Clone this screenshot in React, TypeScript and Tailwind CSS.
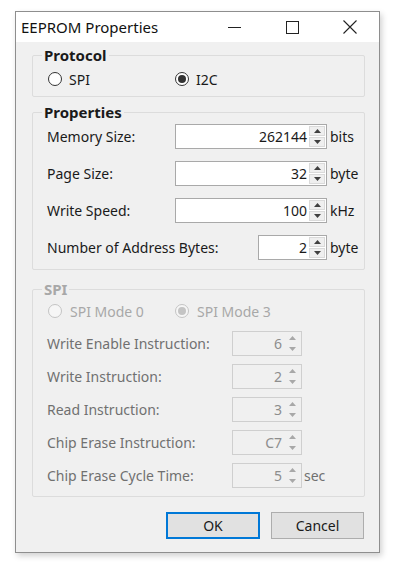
import React from "react";

const FONT = "font-['Noto_Sans',sans-serif]";

function Arrow({ up, disabled }: { up: boolean; disabled?: boolean }) {
  return (
    <svg width="7" height="4" viewBox="0 0 7 4">
      <path
        d={up ? "M0 4 L3.5 0 L7 4 Z" : "M0 0 L3.5 4 L7 0 Z"}
        fill={disabled ? "#a8a8a8" : "#404040"}
      />
    </svg>
  );
}

function Spin({ value, w, disabled }: { value: string; w: string; disabled?: boolean }) {
  return (
    <div
      className={`flex h-[25px] ${w} border ${
        disabled ? "border-[#cfcfcf] bg-[#f0f0f0]" : "border-[#a9a9a9] bg-white"
      }`}
    >
      <div
        className={`flex-1 text-right pr-[2px] leading-[23px] ${
          disabled ? "text-[#8d8d8d]" : "text-[#1a1a1a]"
        }`}
      >
        {value}
      </div>
      <div className="w-[17px] flex flex-col py-[1px] pr-[1px] gap-[1px]">
        <div
          className={`flex-1 flex items-center justify-center ${
            disabled ? "bg-[#f0f0f0]" : "bg-[#efefef] border border-[#dadada]"
          }`}
        >
          <Arrow up disabled={disabled} />
        </div>
        <div
          className={`flex-1 flex items-center justify-center ${
            disabled ? "bg-[#f0f0f0]" : "bg-[#efefef] border border-[#dadada]"
          }`}
        >
          <Arrow up={false} disabled={disabled} />
        </div>
      </div>
    </div>
  );
}

function Radio({ checked, disabled }: { checked?: boolean; disabled?: boolean }) {
  return (
    <div
      className={`w-[14px] h-[14px] rounded-full border flex items-center justify-center ${
        disabled ? "border-[#c4c4c4] bg-[#f6f6f6]" : "border-[#333333] bg-white"
      }`}
    >
      {checked && (
        <div
          className={`w-[8px] h-[8px] rounded-full ${
            disabled ? "bg-[#c4c4c4]" : "bg-[#333333]"
          }`}
        />
      )}
    </div>
  );
}

function Legend({ text, disabled }: { text: string; disabled?: boolean }) {
  return (
    <legend
      className={`-ml-[5px] px-[2px] font-bold leading-[16px] text-[15px] ${
        disabled ? "text-[#a8a8a8]" : "text-[#1a1a1a]"
      }`}
    >
      {text}
    </legend>
  );
}

function PropRow({ label, value, unit, w }: { label: string; value: string; unit: string; w: string }) {
  return (
    <div className="flex items-center h-[25px]">
      <div className="flex-1 text-[#1a1a1a]">{label}</div>
      <Spin value={value} w={w} />
      <div className="w-[37px] pl-[3px] text-[#1a1a1a]">{unit}</div>
    </div>
  );
}

function SpiRow({ label, value, unit }: { label: string; value: string; unit?: string }) {
  return (
    <div className="flex items-center h-[25px]">
      <div className="flex-1 text-[#707070]">{label}</div>
      <Spin value={value} w="w-[70px]" disabled />
      <div className="w-[62px] pl-[2px] text-[#707070]">{unit ?? ""}</div>
    </div>
  );
}

export default function App() {
  return (
    <div className={`w-[399px] h-[567px] bg-white pt-[11px] pl-[15px] ${FONT} text-[14px]`}>
      <div className="w-[365px] h-[542px] border border-[#8e8e8e] bg-[#f0f0f0] flex flex-col shadow-[2px_3px_6px_rgba(0,0,0,0.18)]">
        {/* title bar */}
        <div className="h-[30px] bg-white flex items-center">
          <div className="flex-1 pl-[5px] text-[15px] text-[#111] leading-[30px]">EEPROM Properties</div>
          <div className="w-[58px] h-full flex items-center justify-center">
            <svg width="13" height="13" viewBox="0 0 13 13">
              <path d="M0 6.5 H13" stroke="#222" strokeWidth="1" />
            </svg>
          </div>
          <div className="w-[58px] h-full flex items-center justify-center">
            <svg width="13" height="13" viewBox="0 0 13 13">
              <rect x="0.5" y="0.5" width="12" height="12" fill="none" stroke="#222" strokeWidth="1" />
            </svg>
          </div>
          <div className="w-[58px] h-full flex items-center justify-center">
            <svg width="14" height="14" viewBox="0 0 14 14">
              <path d="M0.5 0.5 L13.5 13.5 M13.5 0.5 L0.5 13.5" stroke="#222" strokeWidth="1.1" />
            </svg>
          </div>
        </div>

        {/* body */}
        <div className="flex-1 flex flex-col pt-[5px] pl-[16px] pr-[14px]">
          {/* Protocol */}
          <fieldset className="border border-[#dcdcdc] rounded-[2px] pl-[14px] pt-[6px] pb-[7px]">
            <Legend text="Protocol" />
            <div className="flex items-center h-[20px] pl-[1px]">
              <div className="w-[127px] flex items-center gap-[7px]">
                <Radio />
                <span className="text-[#1a1a1a]">SPI</span>
              </div>
              <div className="flex items-center gap-[7px]">
                <Radio checked />
                <span className="text-[#1a1a1a]">I2C</span>
              </div>
            </div>
          </fieldset>

          {/* Properties */}
          <fieldset className="mt-[7px] border border-[#dcdcdc] rounded-[2px] pl-[14px] pt-[4px] pb-[9px] flex flex-col gap-[12px]">
            <Legend text="Properties" />
            <PropRow label="Memory Size:" value="262144" unit="bits" w="w-[152px]" />
            <PropRow label="Page Size:" value="32" unit="byte" w="w-[152px]" />
            <PropRow label="Write Speed:" value="100" unit="kHz" w="w-[152px]" />
            <PropRow label="Number of Address Bytes:" value="2" unit="byte" w="w-[69px]" />
          </fieldset>

          {/* SPI */}
          <fieldset className="mt-[11px] border border-[#dcdcdc] rounded-[2px] pl-[14px] pt-[4px] pb-[8px] flex flex-col gap-[8px]">
            <Legend text="SPI" disabled />
            <div className="flex items-center h-[20px] mb-[2px] pl-[1px]">
              <div className="w-[127px] flex items-center gap-[8px]">
                <Radio disabled />
                <span className="text-[#a8a8a8]">SPI Mode 0</span>
              </div>
              <div className="flex items-center gap-[8px]">
                <Radio checked disabled />
                <span className="text-[#a8a8a8]">SPI Mode 3</span>
              </div>
            </div>
            <SpiRow label="Write Enable Instruction:" value="6" />
            <SpiRow label="Write Instruction:" value="2" />
            <SpiRow label="Read Instruction:" value="3" />
            <SpiRow label="Chip Erase Instruction:" value="C7" />
            <SpiRow label="Chip Erase Cycle Time:" value="5" unit="sec" />
          </fieldset>

          {/* Buttons */}
          <div className="mt-[15px] flex justify-end gap-[11px] pr-[1px]">
            <button className="w-[94px] h-[27px] bg-[#e1e1e1] border-2 border-[#0078d7] text-[#1a1a1a]">
              OK
            </button>
            <button className="w-[93px] h-[27px] bg-[#e1e1e1] border border-[#adadad] text-[#1a1a1a]">
              Cancel
            </button>
          </div>
        </div>
      </div>
    </div>
  );
}
